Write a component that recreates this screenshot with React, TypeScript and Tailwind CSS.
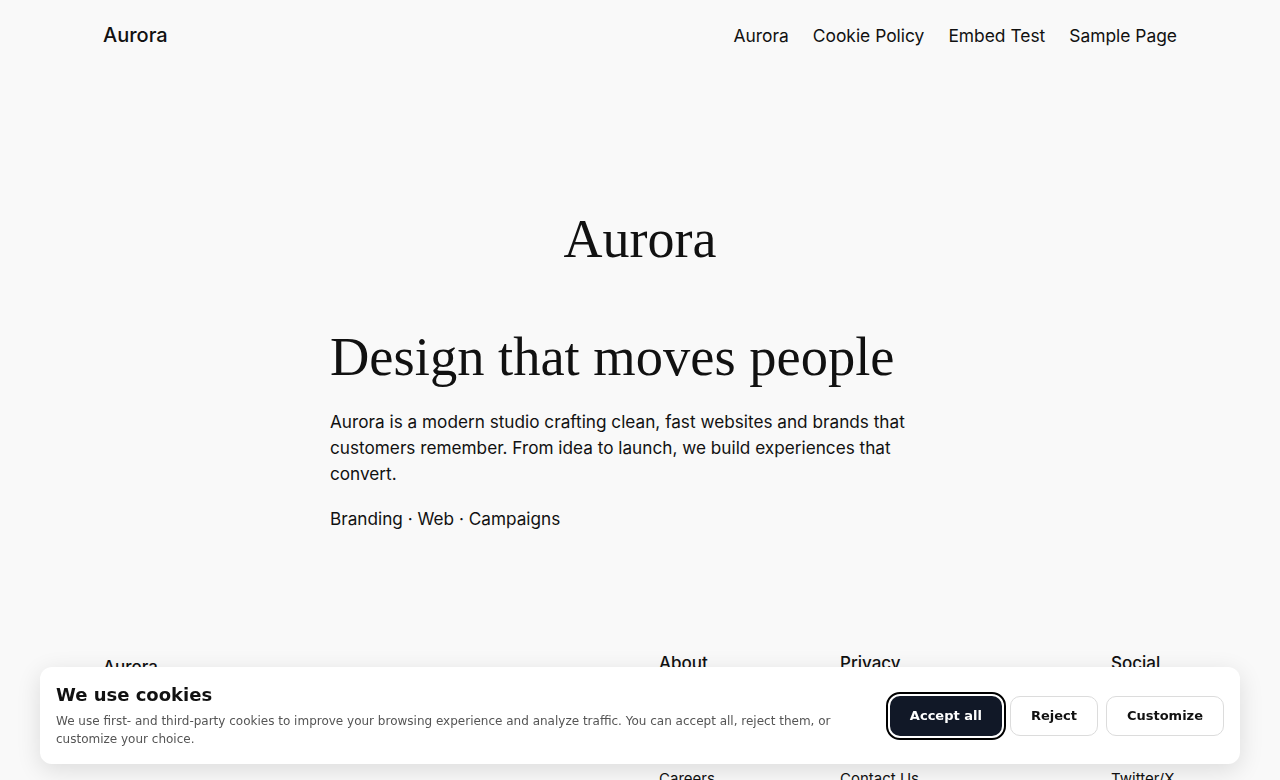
import React from 'react'

const navLinks = ['Aurora', 'Cookie Policy', 'Embed Test', 'Sample Page']

const footerColumns = [
  { title: 'About', width: 'w-[181px]', links: ['Team', 'History', 'Careers'] },
  { title: 'Privacy', width: 'w-[271px]', links: ['Privacy Policy', 'Terms and Conditions', 'Contact Us'] },
  { title: 'Social', width: 'w-[66px]', links: ['Facebook', 'Instagram', 'Twitter/X'] },
]

function SiteHeader() {
  return (
    <header className="flex h-[70px] items-center justify-between px-[103px]">
      <a href="#" className="text-[20px] font-medium text-[#111]">
        Aurora
      </a>
      <nav className="mt-[3px] flex items-center gap-6">
        {navLinks.map((label) => (
          <a key={label} href="#" className="text-[17.4px] text-[#111]">
            {label}
          </a>
        ))}
      </nav>
    </header>
  )
}

function SiteFooter() {
  return (
    <footer className="mt-[120px] flex items-start justify-between px-[103px] pb-16">
      <div className="mt-[3px] text-[17px] font-medium text-[#111]">Aurora</div>
      <div className="flex">
        {footerColumns.map((col) => (
          <div key={col.title} className={`${col.width} flex flex-col`}>
            <h2 className="text-[17px] font-medium leading-[22px] text-[#111]">{col.title}</h2>
            <ul className="mt-[34px] flex flex-col gap-2">
              {col.links.map((link) => (
                <li key={link} className="whitespace-nowrap text-[15px] leading-[22px] text-[#111]">
                  {link}
                </li>
              ))}
            </ul>
          </div>
        ))}
      </div>
    </footer>
  )
}

function CookieBanner() {
  return (
    <div
      className="fixed bottom-4 left-10 right-10 flex items-center gap-6 rounded-xl bg-white p-4 shadow-[0_6px_24px_rgba(0,0,0,0.12)]"
      style={{ fontFamily: '"DejaVu Sans", sans-serif' }}
    >
      <div className="flex-1">
        <h2 className="mb-[5px] text-[18px] font-bold leading-6 text-[#111]">We use cookies</h2>
        <p className="text-[12px] leading-[18px] text-[#555]">
          We use first- and third-party cookies to improve your browsing experience and analyze traffic. You can accept all,
          reject them, or customize your choice.
        </p>
      </div>
      <div className="flex shrink-0 items-center gap-2">
        <button className="h-10 rounded-[10px] bg-[#111827] px-5 text-[13px] font-bold text-white outline-2 outline-offset-2 outline-black">
          Accept all
        </button>
        <button className="h-10 rounded-[10px] border border-[#dcdcdc] bg-white px-5 text-[13px] font-bold text-[#111]">
          Reject
        </button>
        <button className="h-10 rounded-[10px] border border-[#dcdcdc] bg-white px-5 text-[13px] font-bold text-[#111]">
          Customize
        </button>
      </div>
    </div>
  )
}

export default function App() {
  return (
    <div className="min-h-screen bg-[#f9f9f9] text-[#111]" style={{ fontFamily: 'Inter, "Noto Sans", sans-serif' }}>
      <SiteHeader />

      <main className="mx-auto w-[620px]">
        {/* Site title block */}
        <p className="mt-[137px] text-center text-[54px] leading-[1.2]" style={{ fontFamily: '"Liberation Serif", serif' }}>
          Aurora
        </p>

        {/* Intro */}
        <h1 className="mt-[52px] text-[54.5px] leading-[1.2]" style={{ fontFamily: '"Liberation Serif", serif' }}>
          Design that moves people
        </h1>
        <p className="mt-[20px] text-[17.2px] leading-[26px]">
          Aurora is a modern studio crafting clean, fast websites and brands that customers remember. From idea to launch,
          we build experiences that convert.
        </p>
        <p className="mt-[19px] text-[17.2px] leading-[26px]">Branding · Web · Campaigns</p>
      </main>

      <SiteFooter />
      <CookieBanner />
    </div>
  )
}
